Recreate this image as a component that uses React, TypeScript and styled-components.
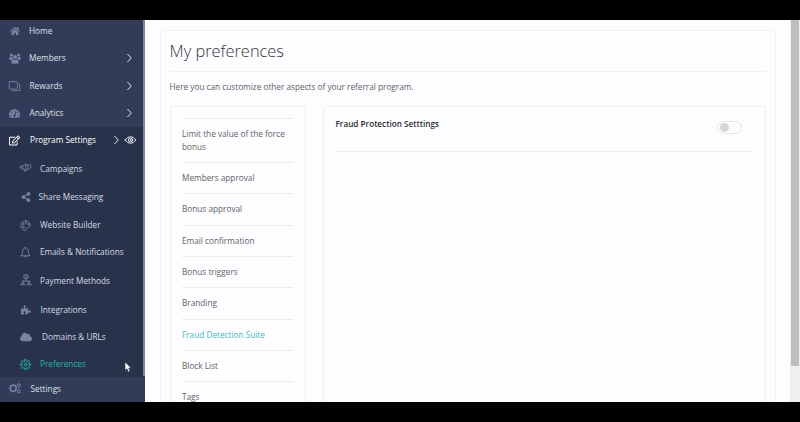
import React from 'react';
import styled, { createGlobalStyle } from 'styled-components';
import { FaHome, FaTachometerAlt, FaRegEdit, FaShareAlt, FaCloud, FaPuzzlePiece } from 'react-icons/fa';

const GlobalStyle = createGlobalStyle`
  * { box-sizing: border-box; }
  body {
    margin: 0;
    background: #000;
    font-family: 'Open Sans', 'Noto Sans', sans-serif;
    font-size: 8.24px;
    overflow: hidden;
  }
`;

const Frame = styled.div`
  height: 422px;
  padding: 20px 0;
  background: #000;
`;

const Viewport = styled.div`
  position: relative;
  display: flex;
  height: 382px;
  overflow: hidden;
  background: #fdfcfe;
`;

const Sidebar = styled.nav`
  width: 143px;
  flex: none;
  overflow: hidden;
  background: #323b58;
`;

const MainMenu = styled.div`
  margin-top: -2.7px;
`;

const MenuRow = styled.div<{ $active?: boolean; $height?: number }>`
  display: flex;
  align-items: center;
  height: ${(p) => p.$height ?? 27.4}px;
  padding: 0 7px 0 8px;
  color: ${(p) => (p.$active ? '#ffffff' : '#dde1eb')};
  background: ${(p) => (p.$active ? '#29324b' : 'transparent')};
`;

const SubMenu = styled.div`
  height: 223.1px;
  padding-top: 0.6px;
  background: #29324b;
`;

const SubRow = styled.div<{ $height: number; $active?: boolean }>`
  display: flex;
  align-items: center;
  height: ${(p) => p.$height}px;
  padding-left: 19px;
  color: ${(p) => (p.$active ? '#1fb5a5' : '#d5dae6')};
`;

const IconSlot = styled.span<{ $tone?: string }>`
  display: flex;
  align-items: center;
  justify-content: center;
  width: 13px;
  flex: none;
  color: ${(p) => p.$tone ?? '#7783a3'};
`;

const Label = styled.span<{ $indent: number }>`
  margin-left: ${(p) => p.$indent}px;
  line-height: 12px;
  white-space: nowrap;
`;

const Trailing = styled.span<{ $open?: boolean }>`
  display: flex;
  align-items: center;
  gap: 6.5px;
  margin-left: auto;
  margin-right: ${(p) => (p.$open ? 0 : 4)}px;
  color: #e6e9f2;
`;

const SidebarTrack = styled.div`
  width: 2px;
  flex: none;
  background: #323b58;
`;

const SidebarThumb = styled.div`
  height: 356px;
  background: #81858f;
`;

const Content = styled.main`
  flex: 1;
  min-width: 0;
  padding: 10px 14.5px 0 15px;
`;

const Page = styled.section`
  height: 420px;
  padding: 0 9px 0 8.5px;
  border: 1px solid #f1f1f4;
  border-radius: 3px;
`;

const Title = styled.h1`
  margin: 0;
  height: 41px;
  padding-top: 8px;
  border-bottom: 1px solid #f1f0f3;
  color: #353539;
  font-size: 16.4px;
  font-weight: 300;
  line-height: 24px;
`;

const Intro = styled.p`
  margin: 8px 0 0;
  height: 25.5px;
  color: #606166;
  line-height: 13px;
`;

const Columns = styled.div`
  display: grid;
  grid-template-columns: 136.5px 1fr;
  column-gap: 17px;
  height: 340px;
`;

const Card = styled.div`
  border: 1px solid #efeff2;
  border-radius: 3px;
  padding: 11px 12px 0 11.5px;
`;

const Option = styled.div<{ $active?: boolean }>`
  padding: 8px 0 9.35px;
  border-top: 1px solid #ececf0;
  color: ${(p) => (p.$active ? '#3fbac3' : '#626368')};
  line-height: 13px;
`;

const CardHeader = styled.div`
  display: flex;
  justify-content: space-between;
  height: 34px;
  padding-right: 11px;
  border-bottom: 1px solid #ececf0;
`;

const CardTitle = styled.h2`
  margin: 0;
  color: #2b2c31;
  font-size: 8.2px;
  font-weight: 600;
  line-height: 12px;
`;

const Switch = styled.span`
  display: flex;
  align-items: center;
  width: 25px;
  height: 13px;
  margin-top: 3px;
  padding-left: 2px;
  border: 1px solid #e4e4e7;
  border-radius: 7px;
`;

const Knob = styled.span`
  width: 9px;
  height: 9px;
  border-radius: 50%;
  background: #d6d6d8;
`;

const RightCard = styled(Card)`
  padding-right: 12px;
`;

const PageTrack = styled.div`
  width: 10px;
  flex: none;
  padding: 0 1px;
  background: #f0f0f1;
`;

const PageThumb = styled.div`
  height: 346px;
  background: #bebebf;
`;

const Pointer = styled.svg`
  position: absolute;
  left: 124px;
  top: 341px;
`;

const Line = styled.svg`
  fill: none;
  stroke: currentColor;
  stroke-linecap: round;
  stroke-linejoin: round;
  overflow: visible;
`;

const Chevron = () => (
  <Line width="5" height="8" viewBox="0 0 5 8" strokeWidth="1">
    <path d="M.7.3 4.3 4 .7 7.7" />
  </Line>
);

const Eye = () => (
  <Line width="11" height="8" viewBox="0 0 11 8" strokeWidth="1">
    <path d="M.2 4C3-.3 8-.3 10.8 4 8 8.3 3 8.3.2 4Z" />
    <circle cx="5.5" cy="4" r="2.1" />
    <circle cx="5.5" cy="4" r=".5" />
  </Line>
);

const People = () => (
  <svg width="12" height="11" viewBox="0 0 12 11" fill="currentColor">
    <circle cx="2.4" cy="2" r="1.6" />
    <circle cx="9.6" cy="2" r="1.6" />
    <circle cx="6" cy="4" r="2.1" />
    <path d="M.2 6.6C0 4.8.7 3.8 1.6 3.8c.6.4 1.2.3 1.8.1 0 1 .3 1.6.7 2.1-1 .1-1.4.5-1.8 1H.8ZM11.8 6.6c.2-1.8-.5-2.8-1.4-2.8-.6.4-1.2.3-1.8.1 0 1-.3 1.6-.7 2.1 1 .1 1.4.5 1.8 1h1.5ZM2.4 9.6c0-2 .7-3.3 1.9-3.3 1.1.8 2.3.8 3.4 0 1.2 0 1.9 1.3 1.9 3.3 0 .7-.5 1.2-1.2 1.2H3.6c-.7 0-1.2-.5-1.2-1.2Z" />
  </svg>
);

const Layers = () => (
  <Line width="11" height="10" viewBox="0 0 11 10" strokeWidth=".9">
    <rect x=".3" y=".6" width="8" height="7.4" rx=".6" />
    <path d="M9.7 2.8h1v6.7H3.3V8.9" />
  </Line>
);

const Megaphone = () => (
  <Line width="12" height="10" viewBox="0 0 12 10" strokeWidth=".8">
    <path d="M1.8 2.2v4M.5 3.2v2M3.2 2.8 5.8.8v7L3.2 5.8ZM5.8 2.3l2-.9v5.8l-2-.7M9 2.4c3-.8 2.8 3.8 0 3.4M4 6.3l.5 2.2M10.3.8l.5.7" transform="translate(0 -1)" />
  </Line>
);

const Palette = () => (
  <Line width="11" height="11" viewBox="0 0 11 11" strokeWidth=".8">
    <path d="M5.5.6a4.9 4.9 0 1 0 0 9.8c1.2-.2.2-1.6.9-2.4 1-1.1 3.5.1 4-2.1A5 5 0 0 0 5.5.6Z" />
    <circle cx="3" cy="4" r=".8" />
    <circle cx="5.7" cy="2.7" r=".7" />
    <circle cx="8.2" cy="4.2" r=".8" />
    <circle cx="3.2" cy="7" r="1" />
  </Line>
);

const Bell = () => (
  <Line width="11" height="11" viewBox="0 0 11 11" strokeWidth=".9">
    <path d="M1 8.8h9C8.5 7.7 8.6 6 8.4 4.1 8.2 2 7.1 1 5.5 1S2.8 2 2.6 4.1C2.4 6 2.5 7.7 1 8.8ZM4.4 9.2c.2 1.3 2 1.3 2.2 0M5.5.4V1" />
  </Line>
);

const Payment = () => (
  <Line width="12" height="11" viewBox="0 0 12 11" strokeWidth=".85">
    <g transform="translate(0 -1)">
      <circle cx="6" cy="2.7" r="2.3" />
      <path d="M6.7 1.9c-1.5-.6-1.7.7-.7.8s.8 1.4-.8.8M6 5v2M3.2 8.3 6 6.6l2.8 1.7M3 6.6a1 1 0 1 0 .1 0M9 6.6a1 1 0 1 0 .1 0M.6 10.4c.2-1.2 4-1.2 4.5 0ZM6.8 10.4c.4-1.2 4.2-1.2 4.6 0Z" />
    </g>
  </Line>
);

const gearPath = (cx: number, cy: number, outer: number, inner: number, teeth: number) => {
  const points: string[] = [];
  for (let i = 0; i < teeth; i++) {
    [[-0.3, inner], [-0.15, outer], [0.15, outer], [0.3, inner]].forEach(([offset, radius]) => {
      const angle = ((i + offset) * 2 * Math.PI) / teeth;
      points.push(`${(cx + radius * Math.sin(angle)).toFixed(2)} ${(cy - radius * Math.cos(angle)).toFixed(2)}`);
    });
  }
  return `M${points.join('L')}Z`;
};

const Gear = () => (
  <Line width="11" height="11" viewBox="0 0 11 11" strokeWidth=".95">
    <path d={gearPath(5.5, 5.5, 5.2, 3.6, 8)} />
    <circle cx="5.5" cy="5.5" r="1.4" />
  </Line>
);

const Gears = () => (
  <Line width="12" height="11" viewBox="0 0 12 11" strokeWidth="1.2">
    <path d={gearPath(4.2, 5.3, 3.6, 2.7, 8)} />
    <path strokeWidth="1" d={gearPath(9.8, 2.4, 1.8, 1.3, 6)} />
    <path strokeWidth="1" d={gearPath(9.8, 8.3, 1.8, 1.3, 6)} />
  </Line>
);

const mainItems = [
  { label: 'Home', icon: <FaHome size={10} />, indent: 8 },
  { label: 'Members', icon: <People />, indent: 8, arrow: true },
  { label: 'Rewards', icon: <Layers />, indent: 8.5, arrow: true },
  { label: 'Analytics', icon: <FaTachometerAlt size={11} />, indent: 8.5, arrow: true },
];

const subItems = [
  { label: 'Campaigns', icon: <Megaphone />, indent: 8, height: 29 },
  { label: 'Share Messaging', icon: <FaShareAlt size={10} />, indent: 6.5, height: 28 },
  { label: 'Website Builder', icon: <Palette />, indent: 8, height: 28 },
  { label: 'Emails & Notifications', icon: <Bell />, indent: 8, height: 26 },
  { label: 'Payment Methods', icon: <Payment />, indent: 8, height: 31 },
  { label: 'Integrations', icon: <FaPuzzlePiece size={10} />, indent: 8.5, height: 27 },
  { label: 'Domains & URLs', icon: <FaCloud size={12} />, indent: 10, height: 27 },
  { label: 'Preferences', icon: <Gear />, indent: 8, height: 27.8, active: true },
];

const options = [
  'Limit the value of the force bonus',
  'Members approval',
  'Bonus approval',
  'Email confirmation',
  'Bonus triggers',
  'Branding',
  'Fraud Detection Suite',
  'Block List',
  'Tags',
];

export default function App() {
  return (
    <Frame>
      <GlobalStyle />
      <Viewport>
        <Sidebar>
          <MainMenu>
            {mainItems.map((item) => (
              <MenuRow key={item.label}>
                <IconSlot>{item.icon}</IconSlot>
                <Label $indent={item.indent}>{item.label}</Label>
                {item.arrow && <Trailing><Chevron /></Trailing>}
              </MenuRow>
            ))}
            <MenuRow $active $height={26.8}>
              <IconSlot $tone="#fff"><FaRegEdit size={11} /></IconSlot>
              <Label $indent={9}>Program Settings</Label>
              <Trailing $open><Chevron /><Eye /></Trailing>
            </MenuRow>
          </MainMenu>
          <SubMenu>
            {subItems.map((item) => (
              <SubRow key={item.label} $height={item.height} $active={item.active}>
                <IconSlot $tone={item.active ? '#1fb5a5' : undefined}>{item.icon}</IconSlot>
                <Label $indent={item.indent}>{item.label}</Label>
              </SubRow>
            ))}
          </SubMenu>
          <MenuRow $height={24.2}>
            <IconSlot><Gears /></IconSlot>
            <Label $indent={9.5}>Settings</Label>
          </MenuRow>
        </Sidebar>
        <SidebarTrack><SidebarThumb /></SidebarTrack>
        <Content>
          <Page>
            <Title>My preferences</Title>
            <Intro>Here you can customize other aspects of your referral program.</Intro>
            <Columns>
              <Card>
                {options.map((option) => (
                  <Option key={option} $active={option === 'Fraud Detection Suite'}>{option}</Option>
                ))}
              </Card>
              <RightCard>
                <CardHeader>
                  <CardTitle>Fraud Protection Setttings</CardTitle>
                  <Switch><Knob /></Switch>
                </CardHeader>
              </RightCard>
            </Columns>
          </Page>
        </Content>
        <PageTrack><PageThumb /></PageTrack>
        <Pointer width="8" height="12" viewBox="0 0 8 12">
          <path d="M1 .8V9.5L3 7.8 4.3 11 6 10.3 4.7 7.2H7.3Z" fill="#fff" stroke="#20283d" strokeWidth=".6" />
        </Pointer>
      </Viewport>
    </Frame>
  );
}
